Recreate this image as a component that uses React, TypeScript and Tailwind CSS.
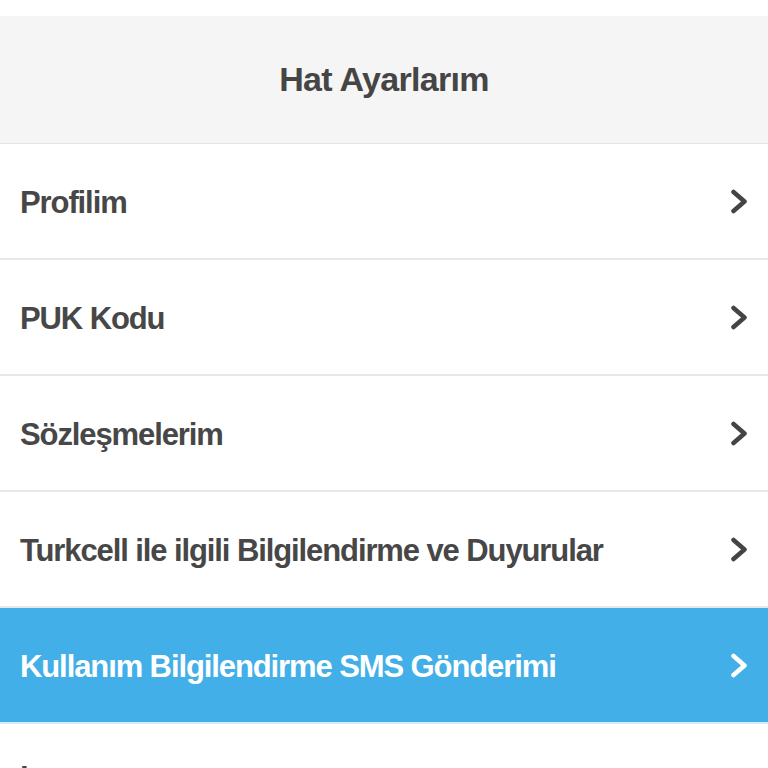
const items = [
  'Profilim',
  'PUK Kodu',
  'Sözleşmelerim',
  'Turkcell ile ilgili Bilgilendirme ve Duyurular',
  'Kullanım Bilgilendirme SMS Gönderimi',
  'İzinlerim',
]

function Chevron({ active }: { active: boolean }) {
  return (
    <svg width="18" height="25" viewBox="0 0 18 25" className="shrink-0">
      <path
        d="M3.5 3 L14.5 12.5 L3.5 22"
        fill="none"
        stroke={active ? '#ffffff' : '#444444'}
        strokeWidth="4.5"
        strokeLinecap="round"
        strokeLinejoin="round"
      />
    </svg>
  )
}

export default function App() {
  const selected = 4
  return (
    <div className="min-h-screen bg-white pt-4 font-['Liberation_Sans',Arial,sans-serif]">
      <header className="h-[128px] bg-[#f5f5f5] border-b border-[#e4e4e4] flex items-center justify-center">
        <h1 className="text-[34px] font-bold text-[#454545] tracking-[-0.7px]">Hat Ayarlarım</h1>
      </header>

      <ul>
        {items.map((label, i) => {
          const active = i === selected
          return (
            <li
              key={label}
              className={
                active
                  ? 'h-[116px] flex items-center justify-between pl-5 pr-5 bg-[#42afe8] border-b-2 border-[#d6edf9]'
                  : 'h-[116px] flex items-center justify-between pl-5 pr-5 bg-white border-b-2 border-[#e8e8e8]'
              }
            >
              <span
                className={
                  active
                    ? 'pt-[4px] text-[31px] font-bold text-white tracking-[-1.1px]'
                    : 'pt-[4px] text-[31px] font-bold text-[#474747] tracking-[-1.1px]'
                }
              >
                {label}
              </span>
              <Chevron active={active} />
            </li>
          )
        })}
      </ul>
    </div>
  )
}
